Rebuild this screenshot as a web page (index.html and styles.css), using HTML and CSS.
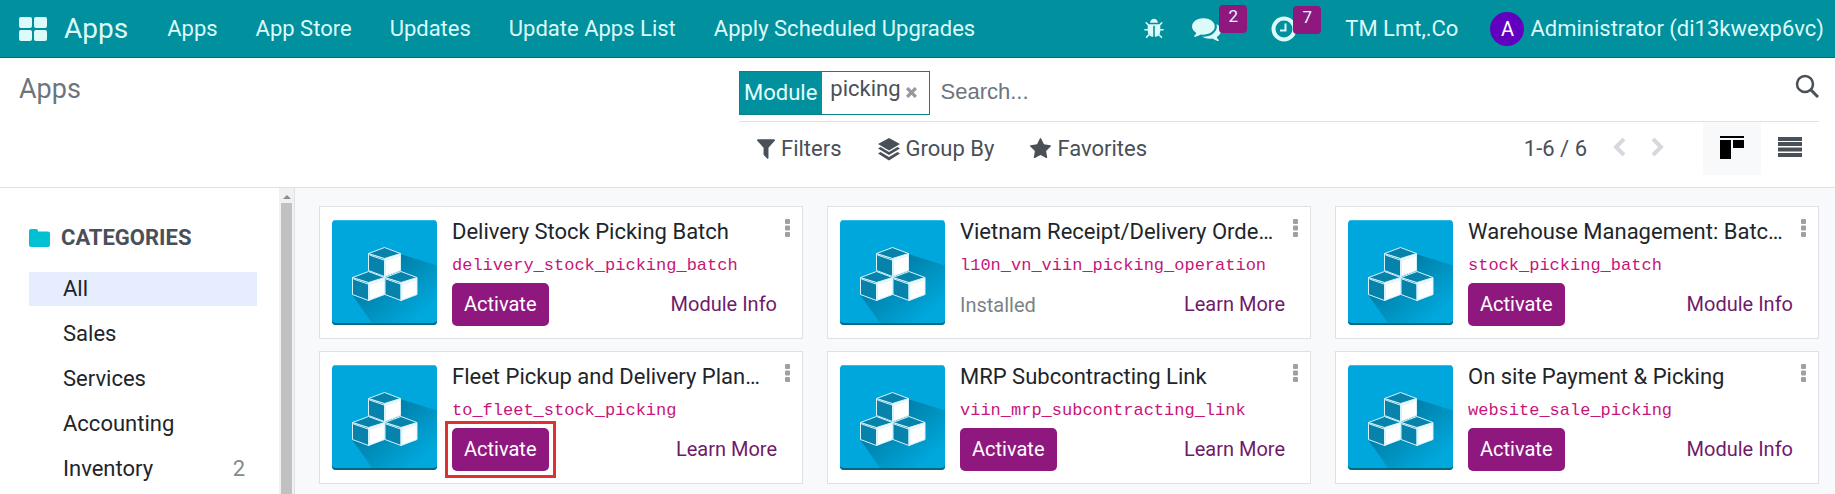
FILE: index.html
```
<!DOCTYPE html>
<html lang="en">
<head>
<meta charset="utf-8">
<title>Apps</title>
<link rel="stylesheet" href="styles.css">
</head>
<body>
<svg class="defs" aria-hidden="true">
  <defs>
    <linearGradient id="shade" x1="0.2" y1="0.2" x2="0.9" y2="0.9">
      <stop offset="0" stop-color="#0078a0"/>
      <stop offset="0.900" stop-color="#00a8dc"/>
    </linearGradient>
    <clipPath id="tile"><rect width="105" height="105" rx="4"/></clipPath>
    <g id="cube" stroke="#d5f3fb" stroke-width="1" stroke-linejoin="round">
      <path d="M0 6 16 11V29L0 23Z" fill="#0783ab"/>
      <path d="M16 11 32 6V23L16 29Z" fill="#fff"/>
      <path d="M0 6 16 0 32 6 16 11Z" fill="#0783ab"/>
      <path d="M1 7.500 17 13 31.500 8" fill="none"/>
      <path d="M17 13V29" fill="none"/>
    </g>
  </defs>
  <symbol id="boxes" viewBox="0 0 105 105">
    <g clip-path="url(#tile)">
      <rect width="105" height="105" fill="#00a7dc"/>
      <path d="M68 34 105 45.500V105H41.500L21 76Z" fill="url(#shade)"/>
      <rect width="105" height="1" fill="#35bce6"/>
      <path d="M0 101Q1 103 4 103H101Q104 103 105 101V105H0Z" fill="#04687f"/>
    </g>
    <use href="#cube" x="36.500" y="27.500"/>
    <use href="#cube" x="20.500" y="51.500"/>
    <use href="#cube" x="53" y="51.500"/>
  </symbol>
  <symbol id="kebab" viewBox="0 0 5 18">
    <rect width="5" height="5" rx="1"/><rect y="6.500" width="5" height="5" rx="1"/><rect y="13" width="5" height="5" rx="1"/>
  </symbol>
</svg>

<header class="navbar">
  <button class="apps-toggle" aria-label="Home menu">
    <svg width="28" height="24" viewBox="0 0 28 24" fill="currentColor"><rect width="13" height="11" rx="2"/><rect x="15" width="13" height="11" rx="2"/><rect y="13" width="13" height="11" rx="2"/><rect x="15" y="13" width="13" height="11" rx="2"/></svg>
  </button>
  <a class="brand" href="#">Apps</a>
  <nav class="menu">
    <a href="#">Apps</a>
    <a href="#">App Store</a>
    <a href="#">Updates</a>
    <a href="#">Update Apps List</a>
    <a href="#">Apply Scheduled Upgrades</a>
  </nav>
  <div class="systray">
    <button class="tray" aria-label="Debug"><svg width="22" height="22" viewBox="0 0 1792 1792" fill="currentColor"><path d="M1696 960q0 26-19 45t-45 19h-224q0 171-67 290l208 209q19 19 19 45t-19 45q-18 19-45 19t-45-19l-198-197q-5 5-15 13t-42 28.500-65 36.500-82 29-97 13v-896h-128v896q-51 0-101.500-13.500t-87-33-66-39-43.500-32.500l-15-14-183 207q-20 21-48 21-24 0-43-16-19-18-20.500-44.500t15.500-46.500l202-227q-58-114-58-274h-224q-26 0-45-19t-19-45 19-45 45-19h224v-294l-173-173q-19-19-19-45t19-45 45-19 45 19l173 173h844l173-173q19-19 45-19t45 19 19 45-19 45l-173 173v294h224q26 0 45 19t19 45zm-480-576h-640q0-133 93.500-226.500t226.500-93.500 226.500 93.500 93.500 226.500z"/></svg></button>
    <button class="tray" aria-label="Messages"><svg width="29" height="29" viewBox="0 0 1792 1792" fill="currentColor"><path d="M1408 768q0 139-94 257t-256.500 186.500-353.500 68.500q-86 0-176-16-124 88-278 128-36 9-86 16h-3q-11 0-20.500-8t-11.500-21q-1-3-1-6.500t.5-6.500 2-6l2.500-5 3.500-5.500 4-5 4.500-5 4-4.500q5-6 23-25t26-29.500 22.500-29 25-38.500 20.500-44q-124-72-195-177t-71-224q0-139 94-257t256.500-186.500 353.500-68.500 353.500 68.500 256.500 186.500 94 257zm384 256q0 120-71 224.500t-195 176.500q10 24 20.500 44t25 38.500 22.500 29 26 29.500 23 25q1 1 4 4.500t4.500 5 4 5 3.500 5.500l2.500 5 2 6 .5 6.500-1 6.500q-3 14-13 22t-22 7q-50-7-86-16-154-40-278-128-90 16-176 16-271 0-472-132 58 4 88 4 161 0 309-45t264-129q125-92 192-212t67-254q0-77-23-152 129 71 204 178t75 230z"/></svg><span class="count">2</span></button>
    <button class="tray" aria-label="Activities"><svg width="26" height="26" viewBox="0 0 26 26" fill="none" stroke="currentColor"><circle cx="13" cy="13" r="10.500" stroke-width="4"/><path d="M14.500 7.500V14.500H9" stroke-width="2"/></svg><span class="count">7</span></button>
    <a class="company" href="#">TM Lmt,.Co</a>
    <a class="user" href="#"><span class="avatar">A</span>Administrator (di13kwexp6vc)</a>
  </div>
</header>

<section class="control">
  <h1 class="crumb">Apps</h1>
  <div class="search-side">
    <div class="searchbar">
      <div class="facet"><span class="facet-label">Module</span><span class="facet-value">picking</span><button class="facet-x" aria-label="Remove"><svg width="11" height="11" viewBox="0 0 10 10" stroke="currentColor" stroke-width="3"><path d="M1 1 9 9M9 1 1 9"/></svg></button></div>
      <input class="query" type="text" placeholder="Search..." aria-label="Search">
      <button class="lens" aria-label="Search"><svg width="24" height="24" viewBox="0 0 24 24" fill="none" stroke="currentColor"><circle cx="10" cy="10" r="8" stroke-width="2.500"/><path d="M16 16 23 23" stroke-width="3"/></svg></button>
    </div>
    <div class="tools">
      <button class="tool"><svg width="18" height="20" viewBox="190 230 1410 1450" preserveAspectRatio="none" fill="currentColor"><path d="M1595 295q17 41-14 70l-493 493v742q0 42-39 59-13 5-25 5-27 0-45-19l-256-256q-19-19-19-45v-486l-493-493q-31-29-14-70 17-39 59-39h1280q42 0 59 39z"/></svg>Filters</button>
      <button class="tool"><svg width="22" height="24" viewBox="0 0 22 24" fill="currentColor"><path d="M11 1 22 7 11 13.500 0 7Z"/><path d="M0 11.500 2.500 10 11 15 19.500 10 22 11.500 11 18Z"/><path d="M0 16.500 2.500 15 11 20 19.500 15 22 16.500 11 23.500Z"/></svg>Group By</button>
      <button class="tool"><svg width="21" height="21" viewBox="64 60 1664 1600" fill="currentColor"><path d="M1728 647q0 22-26 48l-363 354 86 500q1 7 1 20 0 21-10.500 35.500t-30.500 14.500q-19 0-40-12l-449-236-449 236q-22 12-40 12-21 0-31.500-14.500t-10.500-35.500q0-6 2-20l86-500-364-354q-25-27-25-48 0-37 56-46l502-73 225-455q19-41 49-41t49 41l225 455 502 73q56 9 56 46z"/></svg>Favorites</button>
      <div class="pager"><span>1-6 / 6</span>
        <button class="step" aria-label="Previous"><svg width="14" height="20" viewBox="0 0 14 20" fill="none" stroke="currentColor" stroke-width="4"><path d="M12 2 4 10 12 18"/></svg></button>
        <button class="step" aria-label="Next"><svg width="14" height="20" viewBox="0 0 14 20" fill="none" stroke="currentColor" stroke-width="4"><path d="M2 2 10 10 2 18"/></svg></button>
      </div>
      <div class="views">
        <button class="view active" aria-label="Kanban"><svg width="24" height="24" viewBox="0 0 24 24"><path d="M0 1H24V3H0ZM0 5H11V24H0ZM13 5H24V13H13Z"/></svg></button>
        <button class="view" aria-label="List"><svg width="24" height="20" viewBox="0 0 24 20" fill="currentColor"><path d="M0 0H24V4H0ZM0 5H24V9H0ZM0 10.500H24V14.500H0ZM0 16H24V20H0Z"/></svg></button>
      </div>
    </div>
  </div>
</section>

<main class="content">
  <aside class="sidebar">
    <div class="side-body">
      <h2 class="side-title"><svg width="21" height="18" viewBox="0 0 21 18" fill="#00c0d4"><path d="M2 0H7Q9 0 9 2V2.500H19Q21 2.500 21 4.500V16Q21 18 19 18H2Q0 18 0 16V2Q0 0 2 0Z"/></svg>CATEGORIES</h2>
      <ul class="cats">
        <li class="cat selected"><a href="#">All</a></li>
        <li class="cat"><a href="#">Sales</a></li>
        <li class="cat"><a href="#">Services</a></li>
        <li class="cat"><a href="#">Accounting</a></li>
        <li class="cat"><a href="#">Inventory</a><span>2</span></li>
      </ul>
    </div>
    <div class="track"><svg width="8" height="4" viewBox="0 0 8 4" fill="#8c8c8c"><path d="M4 0 8 4H0Z"/></svg><div class="thumb"></div></div>
  </aside>
  <div class="cards">
    <article class="card"><svg class="logo"><use href="#boxes"/></svg><div class="info"><h3>Delivery Stock Picking Batch</h3><code>delivery_stock_picking_batch</code><div class="actions"><button class="activate">Activate</button><a href="#">Module Info</a></div></div><button class="more" aria-label="More"><svg width="5" height="18"><use href="#kebab"/></svg></button></article>
    <article class="card"><svg class="logo"><use href="#boxes"/></svg><div class="info"><h3>Vietnam Receipt/Delivery Order Operations</h3><code>l10n_vn_viin_picking_operation</code><div class="actions"><span class="installed">Installed</span><a href="#">Learn More</a></div></div><button class="more" aria-label="More"><svg width="5" height="18"><use href="#kebab"/></svg></button></article>
    <article class="card"><svg class="logo"><use href="#boxes"/></svg><div class="info"><h3>Warehouse Management: Batch Transfer</h3><code>stock_picking_batch</code><div class="actions"><button class="activate">Activate</button><a href="#">Module Info</a></div></div><button class="more" aria-label="More"><svg width="5" height="18"><use href="#kebab"/></svg></button></article>
    <article class="card"><svg class="logo"><use href="#boxes"/></svg><div class="info"><h3>Fleet Pickup and Delivery Planning</h3><code>to_fleet_stock_picking</code><div class="actions"><span class="marked"><button class="activate">Activate</button></span><a href="#">Learn More</a></div></div><button class="more" aria-label="More"><svg width="5" height="18"><use href="#kebab"/></svg></button></article>
    <article class="card"><svg class="logo"><use href="#boxes"/></svg><div class="info"><h3>MRP Subcontracting Link</h3><code>viin_mrp_subcontracting_link</code><div class="actions"><button class="activate">Activate</button><a href="#">Learn More</a></div></div><button class="more" aria-label="More"><svg width="5" height="18"><use href="#kebab"/></svg></button></article>
    <article class="card"><svg class="logo"><use href="#boxes"/></svg><div class="info"><h3>On site Payment &amp; Picking</h3><code>website_sale_picking</code><div class="actions"><button class="activate">Activate</button><a href="#">Module Info</a></div></div><button class="more" aria-label="More"><svg width="5" height="18"><use href="#kebab"/></svg></button></article>
  </div>
</main>
</body>
</html>
```
FILE: styles.css
```
* { box-sizing: border-box; }
body {
  margin: 0;
  height: 100vh;
  display: flex;
  flex-direction: column;
  overflow: hidden;
  font: 22px/32px Roboto, sans-serif;
  color: #212529;
  background: #fff;
}
a { color: inherit; text-decoration: none; white-space: nowrap; }
button { font: inherit; color: inherit; background: none; border: 0; padding: 0; white-space: nowrap; }
svg { display: block; flex: none; }
h1, h2, h3, ul { margin: 0; padding: 0; font-weight: 400; list-style: none; }
.defs { position: absolute; width: 0; height: 0; }

.navbar {
  display: flex;
  align-items: center;
  flex: none;
  padding: 0 11px 0 19px;
  height: 58px;
  background: #00909e;
  border-bottom: 1px solid #0a6a73;
  color: #dcfafa;
}
.brand { font-size: 28px; margin: 0 39px 0 17px; }
.menu { display: flex; gap: 38px; }
.systray { display: flex; align-items: center; margin-left: auto; }
.tray { position: relative; margin-right: 27px; }
.tray + .tray { margin-right: 50px; }
.tray + .tray + .tray { margin-right: 48px; }
.count {
  position: absolute;
  left: 27px;
  top: -9px;
  width: 28px;
  height: 28px;
  border-radius: 4px;
  background: #8f187f;
  font-size: 17px;
  line-height: 22px;
}
.tray + .tray + .tray .count { left: 22px; top: -10px; }
.user { display: flex; align-items: center; margin-left: 32px; }
.avatar {
  width: 34px;
  margin-right: 6px;
  border-radius: 50%;
  background: #6200bf;
  color: #fff;
  font-size: 20px;
  line-height: 34px;
  text-align: center;
}

.control {
  display: grid;
  grid-template-columns: 2fr 3fr;
  flex: none;
  height: 130px;
  padding: 0 16px 0 19px;
  border-bottom: 1px solid #dee2e6;
  color: #495057;
}
.crumb { font-size: 27px; padding-top: 15px; color: #6c757d; }
.searchbar { display: flex; align-items: center; height: 64px; border-bottom: 1px solid #dee2e6; }
.facet { display: flex; height: 44px; border: 1px solid #0d7f88; margin-top: 6px; }
.facet-label { padding: 5px 5px 5px 4px; background: #00909e; color: #e6ffff; }
.facet-value { padding: 1px 5px 0 8px; }
.facet-x { padding: 0 12px 0 0; color: #999; }
.query {
  flex: 1;
  min-width: 0;
  margin: 5px 0 0 11px;
  padding: 0;
  border: 0;
  outline: 0;
  font: 22px/32px "Liberation Sans", sans-serif;
}
.query::placeholder { color: #6c757d; opacity: 1; }
.lens { margin-bottom: 7px; }
.tools { display: flex; align-items: center; height: 53px; padding-left: 18px; }
.tool { display: flex; align-items: center; gap: 6px; margin-right: 36px; }
.pager { display: flex; align-items: center; gap: 25px; margin-left: auto; }
.step { color: #d5d8dc; padding-bottom: 4px; }
.views { display: flex; margin-left: 38px; }
.view { display: grid; place-items: center; width: 58px; height: 53px; padding-bottom: 4px; }
.view.active { background: #f8f9fa; }

.content { display: flex; flex: 1; min-height: 0; background: #f8f9fa; }
.sidebar { display: flex; flex: none; width: 295px; background: #fff; border-right: 1px solid #dee2e6; }
.side-body { flex: 1; padding: 34px 22px 0 29px; overflow: hidden; }
.side-title { display: flex; align-items: center; gap: 11px; font-size: 22px; font-weight: 700; color: #495057; margin-bottom: 18px; }
.cats { display: grid; gap: 11px; }
.cat { display: flex; justify-content: space-between; padding: 1px 12px 1px 34px; }
.cat span { color: #888; }
.selected { background: #e5edff; }
.track { width: 15px; padding: 7px 2px 0; background: #f1f1f1; display: flex; flex-direction: column; align-items: center; }
.thumb { flex: 1; width: 11px; margin-top: 4px; background: #c1c1c1; }

.cards {
  flex: 1;
  display: grid;
  grid-template-columns: repeat(3, minmax(0, 1fr));
  align-content: start;
  gap: 12px 24px;
  padding: 18px 16px 0 24px;
}
.card { position: relative; display: flex; gap: 15px; background: #fff; border: 1px solid #dee2e6; padding: 12px 25px 12px 12px; }
.logo { width: 105px; height: 105px; margin-top: 1px; }
.info { flex: 1; min-width: 0; }
.info h3 { font-size: 22px; line-height: 26px; margin-right: 10px; overflow: hidden; text-overflow: ellipsis; white-space: nowrap; }
.info code { display: block; font: 17px/24px "Liberation Mono", monospace; color: #c7157a; margin: 9px 0 5px; }
.actions { display: flex; justify-content: space-between; align-items: center; height: 43px; font-size: 20px; color: #701a6b; }
.actions > a { padding-bottom: 2px; }
.activate { height: 43px; padding: 0 12px 2px; border-radius: 5px; background: #8f187f; color: #fff; }
.marked { display: flex; outline: 3px solid #e03131; outline-offset: 4px; }
.installed { color: #7c8287; }
.more { position: absolute; right: 12px; top: 12px; color: #999; fill: #a0a0a0; }
```
